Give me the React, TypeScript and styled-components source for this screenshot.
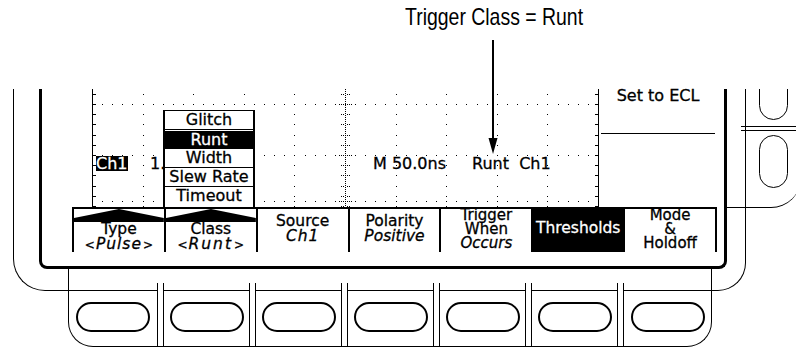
import React from "react";
import styled, { createGlobalStyle } from "styled-components";

const ink = "#000";

const GlobalStyle = createGlobalStyle`
  *, *::before, *::after { box-sizing: border-box; }
  html, body { margin: 0; padding: 0; background: #fff; }
  body { font-family: "DejaVu Sans", "Noto Sans", sans-serif; color: ${ink}; }
`;

const Stage = styled.div`
  position: relative;
  width: 796px;
  height: 347px;
  overflow: hidden;
  display: grid;
  grid-template-columns: 13px 26px 29px 644px 15px 19px 50px;
  grid-template-rows: 89px 119px 61px 14px 8px 56px;
`;

const Header = styled.header`
  grid-column: 1 / -1;
  grid-row: 1;
  padding: 3px 0 0 405px;
`;

const Title = styled.h1`
  display: inline-block;
  margin: 0;
  font-family: "Liberation Sans", Arial, sans-serif;
  font-weight: normal;
  font-size: 24px;
  line-height: 28px;
  white-space: nowrap;
  transform: scaleX(0.81);
  transform-origin: left top;
`;

// outline of the instrument case around the screen
const CaseLeft = styled.div`
  grid-column: 2 / 4;
  grid-row: 2 / 6;
  border-left: 1px solid ${ink};
  border-bottom: 1px solid ${ink};
  border-bottom-left-radius: 32px;
`;

const CaseRight = styled.div`
  grid-column: 5 / 7;
  grid-row: 2 / 6;
  border-right: 1px solid ${ink};
  border-bottom: 1px solid ${ink};
  border-bottom-right-radius: 28px;
`;

const SidePanel = styled.div`
  grid-column: 6 / 8;
  grid-row: 2;
  width: 74px;
  border-bottom: 1px solid ${ink};
  border-bottom-right-radius: 30px;
  overflow: hidden;
  display: flex;
  flex-direction: column;
`;

const SideSlot = styled.div<{ $top?: boolean }>`
  display: flex;
  align-items: flex-end;
  height: ${p => (p.$top ? "37px" : "auto")};
  padding: ${p => (p.$top ? "0 0 6px 32px" : "4px 0 0 32px")};
`;

const SideKey = styled.div`
  flex-shrink: 0;
  width: 29px;
  height: 53px;
  border: 1.5px solid ${ink};
  border-radius: 15px;
`;

const DoubleRule = styled.div`
  margin-left: 14px;
  height: 5px;
  border-top: 1px solid ${ink};
  border-bottom: 1px solid ${ink};
`;

const Screen = styled.section`
  grid-column: 3 / 6;
  grid-row: 2 / 4;
  border: 3px solid ${ink};
  border-top: 0;
  border-radius: 0 0 8px 8px;
  display: flex;
  flex-direction: column;
  font-size: 16px;
  -webkit-text-stroke: 0.3px currentColor;
`;

const Display = styled.div`
  display: flex;
  height: 118px;
  padding-left: 50px;
`;

const Graticule = styled.div`
  position: relative;
  flex-shrink: 0;
  width: 507px;
  height: 118px;
`;

const GridArt = styled.svg`
  position: absolute;
  left: 0;
  top: 0;
`;

const Readout = styled.div`
  position: relative;
  display: grid;
  grid-template-columns: 54px 223px 99px 1fr;
  padding: 67px 0 0 4px;
  line-height: 15px;
  white-space: pre;
`;

const Inverse = styled.span`
  display: inline-block;
  height: 15px;
  background: ${ink};
  color: #fff;
`;

const Flyout = styled.ul`
  position: absolute;
  left: 71px;
  top: 21px;
  width: 92px;
  height: 97px;
  margin: 0;
  padding: 0;
  list-style: none;
  background: #fff;
  border: 2px solid ${ink};
  border-top-width: 1px;
  border-bottom: 0;
  display: flex;
  flex-direction: column;
`;

const FlyoutItem = styled.li<{ $selected?: boolean }>`
  height: ${p => (p.$selected ? "18px" : "19px")};
  margin-top: ${p => (p.$selected ? "1px" : "0")};
  line-height: 18px;
  text-align: center;
  white-space: nowrap;
  border-bottom: ${p => (p.$selected ? "0" : `1px solid ${ink}`)};
  background: ${p => (p.$selected ? ink : "#fff")};
  color: ${p => (p.$selected ? "#fff" : ink)};
  &:last-child {
    flex: 1;
    border-bottom: 0;
  }
`;

const StatusPanel = styled.div`
  flex: 1;
  padding: 0 9px 0 2px;
`;

const Status = styled.div`
  line-height: 14px;
  text-align: center;
  white-space: nowrap;
`;

const StatusRule = styled.div`
  margin-top: 30px;
  border-top: 1px solid ${ink};
`;

const MenuRow = styled.div`
  display: flex;
  height: 45px;
  margin: 0 7px 0 30px;
  border-top: 2px solid ${ink};
  font-size: 15.5px;
`;

const SoftKey = styled.div<{ $active?: boolean; $pointer?: boolean; $lines?: number }>`
  flex: 1 1 0;
  min-width: 0;
  border-left: 2px solid ${ink};
  &:last-child {
    border-right: 2px solid ${ink};
  }
  display: flex;
  flex-direction: column;
  align-items: center;
  justify-content: ${p => (p.$pointer ? "flex-start" : "center")};
  padding-bottom: ${p => (p.$pointer ? 0 : p.$lines === 3 ? 3 : 4)}px;
  background: ${p => (p.$active ? ink : "transparent")};
  color: ${p => (p.$active ? "#fff" : ink)};
  font-size: ${p => (p.$lines === 3 ? "15px" : "inherit")};
  line-height: ${p => (p.$lines === 3 ? "14.3px" : "14.5px")};
  text-align: center;
  white-space: nowrap;
`;

const PointerArt = styled.svg`
  flex-shrink: 0;
  align-self: stretch;
  display: block;
`;

const KeyLine = styled.span`
  display: block;
`;

const Em = styled.span<{ $spread?: number }>`
  font-style: italic;
  letter-spacing: ${p => p.$spread ?? 0}px;
`;

const Angle = styled.span`
  font-size: 12px;
  padding: 0 1px;
`;

const ButtonRow = styled.div`
  grid-column: 4;
  grid-row: 4 / 7;
  display: flex;
  align-items: flex-end;
  gap: 5px;
  border: 1px solid ${ink};
  border-top: 0;
  border-radius: 0 0 25px 25px;
`;

const ButtonCell = styled.div<{ $edge?: "left" | "right" }>`
  flex-shrink: 0;
  width: ${p => (p.$edge === "left" ? 89 : p.$edge === "right" ? 88 : 87)}px;
  height: 63px;
  padding-top: 7px;
  border-left: ${p => (p.$edge === "left" ? "0" : `1px solid ${ink}`)};
  border-right: ${p => (p.$edge === "right" ? "0" : `1px solid ${ink}`)};
  display: flex;
  flex-direction: column;
`;

const ButtonFace = styled.div`
  flex: 1;
  border-top: 1px solid ${ink};
  display: flex;
  justify-content: center;
  padding-top: 11px;
`;

const Oval = styled.div`
  width: 74px;
  height: 30px;
  border: 2px solid ${ink};
  border-radius: 15px;
`;

const Callout = styled.svg`
  position: absolute;
  left: 487px;
  top: 38px;
`;

// graticule drawing
const GW = 507;
const GH = 118;
const MAJOR_X = 50.6;
const MINOR_X = MAJOR_X / 5;
const MINOR_Y = 10.2;
const ROWS = [15, 66, 112];
const CENTER_X = 253;

const dot = (x: number, y: number) => `M${Math.round(x)} ${Math.round(y)}h1v1h-1z`;

function graticulePath() {
  const d: string[] = [`M0 0h1v${GH}h-1z`, `M${GW - 1} 0h1v${GH}h-1z`];
  const minorYs: number[] = [];
  for (let y = ROWS[0] - MINOR_Y; y < GH; y += MINOR_Y) minorYs.push(y);
  minorYs.forEach(y => {
    d.push(`M1 ${Math.round(y)}h3v1h-3z`);
    d.push(`M${GW - 4} ${Math.round(y)}h3v1h-3z`);
  });
  ROWS.forEach(y => {
    for (let k = 1; k < 50; k++) d.push(dot(k * MINOR_X, y));
  });
  for (let k = 1; k < 10; k++) {
    if (k === 5) continue;
    minorYs.forEach(y => d.push(dot(k * MAJOR_X, y)));
  }
  for (let y = 0; y < GH; y += 2) d.push(dot(CENTER_X, y));
  minorYs.forEach(y => [-4, -2, 2, 4].forEach(o => d.push(dot(CENTER_X + o, y))));
  ROWS.forEach(y => [-6, -4, -2, 2, 4, 6].forEach(o => d.push(dot(CENTER_X + o, y))));
  return d.join("");
}

const GRATICULE = graticulePath();

const Pointer = () => (
  <PointerArt width="100%" height="13" viewBox="0 0 90 13" preserveAspectRatio="none">
    <polygon points="0,9 45,0 90,9 90,13 0,13" fill={ink} />
  </PointerArt>
);

const Choice = ({ value, spread }: { value: string; spread: number }) => (
  <KeyLine>
    <Angle>&lt;</Angle>
    <Em $spread={spread}>{value}</Em>
    <Angle>&gt;</Angle>
  </KeyLine>
);

const classes = ["Glitch", "Runt", "Width", "Slew Rate", "Timeout"];
const bezelKeys: Array<"left" | "right" | undefined> = [
  "left", undefined, undefined, undefined, undefined, undefined, "right",
];

export default function App() {
  return (
    <>
      <GlobalStyle />
      <Stage>
        <Header>
          <Title>Trigger Class = Runt</Title>
        </Header>
        <CaseLeft />
        <CaseRight />
        <SidePanel>
          <SideSlot $top>
            <SideKey />
          </SideSlot>
          <DoubleRule />
          <SideSlot>
            <SideKey />
          </SideSlot>
        </SidePanel>
        <Screen>
          <Display>
            <Graticule>
              <GridArt width={GW} height={GH} viewBox={`0 0 ${GW} ${GH}`} shapeRendering="crispEdges">
                <path d={GRATICULE} fill={ink} />
              </GridArt>
              <Readout>
                <span><Inverse>Ch1</Inverse></span>
                <span>1.00V</span>
                <span>M 50.0ns</span>
                <span>Runt  Ch1</span>
              </Readout>
              <Flyout>
                {classes.map(c => (
                  <FlyoutItem key={c} $selected={c === "Runt"}>{c}</FlyoutItem>
                ))}
              </Flyout>
            </Graticule>
            <StatusPanel>
              <Status>Set to ECL</Status>
              <StatusRule />
            </StatusPanel>
          </Display>
          <MenuRow>
            <SoftKey $pointer>
              <Pointer />
              <KeyLine>Type</KeyLine>
              <Choice value="Pulse" spread={1} />
            </SoftKey>
            <SoftKey $pointer>
              <Pointer />
              <KeyLine>Class</KeyLine>
              <Choice value="Runt" spread={2} />
            </SoftKey>
            <SoftKey>
              <KeyLine>Source</KeyLine>
              <KeyLine><Em $spread={1}>Ch1</Em></KeyLine>
            </SoftKey>
            <SoftKey>
              <KeyLine>Polarity</KeyLine>
              <KeyLine><Em>Positive</Em></KeyLine>
            </SoftKey>
            <SoftKey $lines={3}>
              <KeyLine>Trigger</KeyLine>
              <KeyLine>When</KeyLine>
              <KeyLine><Em>Occurs</Em></KeyLine>
            </SoftKey>
            <SoftKey $active>
              <KeyLine>Thresholds</KeyLine>
            </SoftKey>
            <SoftKey $lines={3}>
              <KeyLine>Mode</KeyLine>
              <KeyLine>&amp;</KeyLine>
              <KeyLine>Holdoff</KeyLine>
            </SoftKey>
          </MenuRow>
        </Screen>
        <ButtonRow>
          {bezelKeys.map((edge, i) => (
            <ButtonCell key={i} $edge={edge}>
              <ButtonFace>
                <Oval />
              </ButtonFace>
            </ButtonCell>
          ))}
        </ButtonRow>
        <Callout width="12" height="118" viewBox="0 0 12 118">
          <line x1="6" y1="2" x2="6" y2="104" stroke={ink} strokeWidth="2" />
          <polygon points="1.5,100 10.5,100 6,116" fill={ink} />
        </Callout>
      </Stage>
    </>
  );
}
